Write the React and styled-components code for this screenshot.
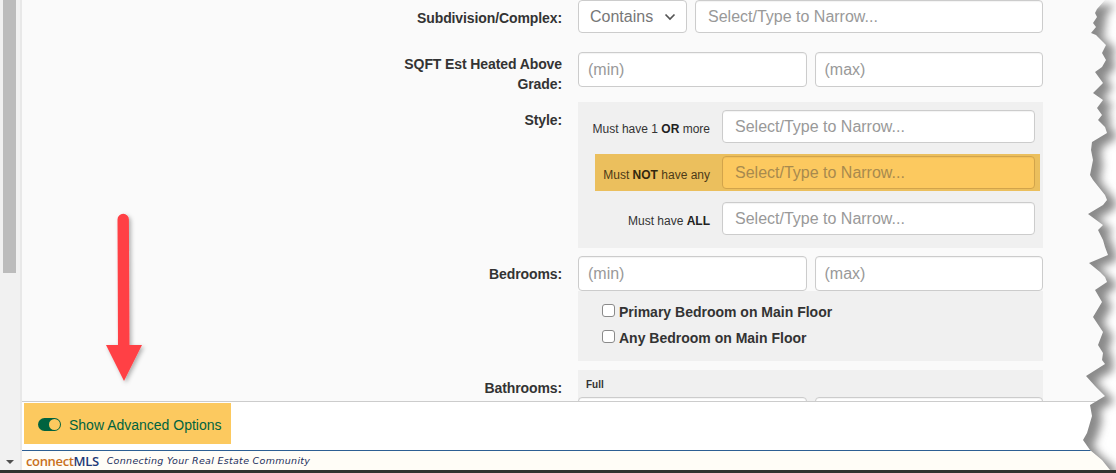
import React from 'react';
import styled, { createGlobalStyle } from 'styled-components';

const GlobalStyle = createGlobalStyle`
	html, body {
		margin: 0;
		padding: 0;
		background: #fff;
		overflow: hidden;
	}
	* {
		box-sizing: border-box;
	}
`;

const Page = styled.div`
	position: relative;
	width: 1116px;
	height: 473px;
	display: flex;
	flex-direction: column;
	overflow: hidden;
	font-family: 'Liberation Sans', Arial, sans-serif;
	color: #333;
`;

const Window = styled.div`
	flex: 1;
	min-height: 0;
	display: flex;
`;

const BottomStrip = styled.div`
	height: 3px;
	background: #33322f;
`;

const Scrollbar = styled.div`
	width: 20px;
	background: #f1f1f1;
	display: flex;
	flex-direction: column;
	justify-content: space-between;
	align-items: flex-start;
	padding: 0 0 6px 3px;
`;

const ScrollThumb = styled.div`
	width: 13px;
	height: 273px;
	background: #bcbcbc;
`;

const ScrollArrow = styled.div`
	width: 0;
	height: 0;
	margin-left: 3px;
	border-left: 4px solid transparent;
	border-right: 4px solid transparent;
	border-top: 4px solid #505050;
`;

const Main = styled.div`
	flex: 1;
	min-width: 0;
	display: flex;
	flex-direction: column;
	border-left: 2px solid #e8e8e8;
	background: #fff;
`;

const FormArea = styled.div`
	height: 401px;
	flex: none;
	overflow: hidden;
	background: #fafafa;
`;

const Form = styled.div`
	display: grid;
	grid-template-columns: 540px 465px;
	column-gap: 16px;
`;

const FieldLabel = styled.div`
	text-align: right;
	font-size: 14px;
	font-weight: bold;
	line-height: 20px;
	letter-spacing: -0.1px;
	padding-top: ${({ $top }) => $top}px;
	padding-left: 370px;
`;

const Field = styled.div`
	margin-bottom: ${({ $gap }) => $gap}px;
	min-width: 0;
`;

const InputRow = styled.div`
	display: flex;
	gap: 8px;
`;

const TextBox = styled.input`
	flex: 1;
	min-width: 0;
	width: 100%;
	height: ${({ $h }) => $h}px;
	padding: 0 8px 0 ${({ $pad }) => $pad}px;
	border: 1px solid ${({ $hot }) => ($hot ? '#d2a44b' : '#ccc')};
	border-radius: 4px;
	background: ${({ $hot }) => ($hot ? '#fcc95f' : '#fff')};
	box-shadow: inset 0 1px 1px rgba(0, 0, 0, 0.05);
	font-family: inherit;
	font-size: 16px;
	outline: none;

	&::placeholder {
		color: ${({ $hot }) => ($hot ? '#a88a4e' : '#999')};
		opacity: 1;
	}
`;

const SelectBox = styled.div`
	flex: none;
	width: 109px;
	height: 33px;
	display: flex;
	align-items: center;
	gap: 11px;
	padding-left: 11px;
	border: 1px solid #ccc;
	border-radius: 4px;
	background: #fff;
	color: #777;
	font-size: 16px;
`;

const Panel = styled.div`
	background: #f0f0f0;
	padding: ${({ $pad }) => $pad};
`;

const RuleRow = styled.div`
	display: grid;
	grid-template-columns: 115px 313px;
	column-gap: 12px;
	align-items: center;
	width: 445px;
	height: 37px;
	margin: 0 0 9px 17px;
	padding-right: 5px;
	background: ${({ $hot }) => ($hot ? '#ebbf5d' : 'transparent')};

	&:last-child {
		margin-bottom: 0;
	}
`;

const RuleLabel = styled.div`
	display: flex;
	justify-content: flex-end;
	font-size: 12px;
	line-height: 16px;
	padding-top: 5px;
	white-space: nowrap;
	color: ${({ $hot }) => ($hot ? '#4b3a17' : '#333')};

	b {
		color: ${({ $hot }) => ($hot ? '#33280f' : '#222')};
	}
`;

const CheckLine = styled.label`
	display: flex;
	align-items: center;
	gap: 4px;
	height: 26px;
	font-size: 14px;
	font-weight: bold;
`;

const CheckBox = styled.input`
	appearance: none;
	flex: none;
	width: 13px;
	height: 13px;
	margin: -4px 0 0;
	border: 1px solid #8a8a8a;
	border-radius: 3px;
	background: #fff;
`;

const TinyLabel = styled.div`
	font-size: 10px;
	font-weight: bold;
	line-height: 12px;
	margin: 0 0 6px 8px;
	color: #333;
`;

const AdvancedBar = styled.div`
	height: 49px;
	flex: none;
	border-top: 1px solid #ccc;
	padding: 1px 0 0 2px;
	background: #fff;
`;

const AdvancedButton = styled.div`
	width: 207px;
	height: 41px;
	display: flex;
	align-items: center;
	gap: 8px;
	padding: 2px 0 0 14px;
	background: #fcc95f;
	color: #00633f;
	font-size: 14px;
`;

const Switch = styled.div`
	width: 23px;
	height: 13px;
	display: flex;
	align-items: center;
	justify-content: flex-end;
	padding-right: 1px;
	border-radius: 7px;
	background: #00633f;
`;

const SwitchKnob = styled.div`
	width: 11px;
	height: 11px;
	border-radius: 50%;
	background: #fcc95f;
`;

const Footer = styled.div`
	flex: 1;
	display: flex;
	align-items: center;
	gap: 8px;
	padding-left: 4px;
	border-top: 1px solid #2d5f93;
	background: #fffdf7;
`;

const Brand = styled.div`
	font-family: 'Open Sans', 'Noto Sans', sans-serif;
	font-size: 13px;
	font-weight: 600;
	letter-spacing: -0.35px;
	color: #c8701c;

	span {
		color: #1f3a78;
	}
`;

const Tagline = styled.div`
	font-family: 'DejaVu Sans', Verdana, sans-serif;
	font-size: 9.5px;
	font-style: italic;
	letter-spacing: 0.3px;
	color: #1c2f5c;
`;

const ArrowArt = styled.svg`
	position: absolute;
	left: 96px;
	top: 205px;
`;

const TornEdge = styled.svg`
	position: absolute;
	right: 0;
	top: 0;
`;

const EDGE = [
	[1105, 0], [1097, 9], [1095, 13], [1097, 17], [1093, 23], [1096, 27], [1091, 33], [1096, 35],
	[1103, 42], [1106, 45], [1102, 53], [1106, 60], [1102, 67], [1095, 72], [1103, 83], [1093, 93],
	[1103, 100], [1097, 108], [1102, 115], [1098, 120], [1105, 127], [1107, 133], [1092, 142], [1091, 150],
	[1093, 160], [1090, 175], [1093, 180], [1105, 195], [1107, 200], [1103, 205], [1088, 214], [1103, 225],
	[1098, 230], [1103, 240], [1105, 247], [1108, 255], [1089, 263], [1100, 272], [1105, 277], [1107, 282],
	[1095, 290], [1102, 302], [1093, 317], [1103, 332], [1098, 345], [1103, 353], [1102, 360], [1105, 364],
	[1086, 376], [1095, 386], [1105, 396], [1090, 405], [1092, 416], [1087, 433], [1083, 440], [1090, 450],
	[1102, 460], [1110, 470],
];

const EDGE_LEFT = 1060;
const edgePoints = EDGE.map(([x, y]) => `${x - EDGE_LEFT},${y}`).join(' ');
const paperRight = `56,0 ${edgePoints} 56,470`;
const paperLeft = `0,0 ${edgePoints} 0,470`;

const Chevron = () => (
	<svg width="12" height="8" viewBox="0 0 12 8" fill="none">
		<path d="M1.5 1.5L6 6l4.5-4.5" stroke="#555" strokeWidth="1.7" />
	</svg>
);

const Rule = ({ hot, children }) => (
	<RuleRow $hot={hot}>
		<RuleLabel $hot={hot}>
			<span>{children}</span>
		</RuleLabel>
		<TextBox $h={33} $pad={12} $hot={hot} readOnly placeholder="Select/Type to Narrow..." />
	</RuleRow>
);

const MinMax = () => (
	<InputRow>
		<TextBox $h={35} $pad={9} readOnly placeholder="(min)" />
		<TextBox $h={35} $pad={9} readOnly placeholder="(max)" />
	</InputRow>
);

export default function App() {
	return (
		<Page>
			<GlobalStyle />
			<Window>
				<Scrollbar>
					<ScrollThumb />
					<ScrollArrow />
				</Scrollbar>
				<Main>
					<FormArea>
						<Form>
							<FieldLabel $top={8}>Subdivision/Complex:</FieldLabel>
							<Field $gap={19}>
								<InputRow>
									<SelectBox>
										Contains
										<Chevron />
									</SelectBox>
									<TextBox $h={33} $pad={12} readOnly placeholder="Select/Type to Narrow..." />
								</InputRow>
							</Field>

							<FieldLabel $top={2}>SQFT Est Heated Above Grade:</FieldLabel>
							<Field $gap={15}>
								<MinMax />
							</Field>

							<FieldLabel $top={8}>Style:</FieldLabel>
							<Field $gap={8}>
								<Panel $pad="6px 0 11px">
									<Rule>Must have 1 <b>OR</b> more</Rule>
									<Rule hot>Must <b>NOT</b> have any</Rule>
									<Rule>Must have <b>ALL</b></Rule>
								</Panel>
							</Field>

							<FieldLabel $top={8}>Bedrooms:</FieldLabel>
							<Field $gap={9}>
								<MinMax />
								<Panel $pad="8px 0 10px 24px">
									<CheckLine>
										<CheckBox type="checkbox" />
										Primary Bedroom on Main Floor
									</CheckLine>
									<CheckLine>
										<CheckBox type="checkbox" />
										Any Bedroom on Main Floor
									</CheckLine>
								</Panel>
							</Field>

							<FieldLabel $top={8}>Bathrooms:</FieldLabel>
							<Field $gap={0}>
								<Panel $pad="9px 0 0">
									<TinyLabel>Full</TinyLabel>
									<MinMax />
								</Panel>
							</Field>
						</Form>
					</FormArea>
					<AdvancedBar>
						<AdvancedButton>
							<Switch>
								<SwitchKnob />
							</Switch>
							Show Advanced Options
						</AdvancedButton>
					</AdvancedBar>
					<Footer>
						<Brand>connect<span>MLS</span></Brand>
						<Tagline>Connecting Your Real Estate Community</Tagline>
					</Footer>
				</Main>
			</Window>
			<BottomStrip />

			<ArrowArt width="60" height="190" viewBox="0 0 60 190">
				<defs>
					<filter id="arrowShadow" x="-30%" y="-10%" width="170%" height="120%">
						<feDropShadow dx="2" dy="2" stdDeviation="2" floodColor="#000" floodOpacity="0.3" />
					</filter>
				</defs>
				<g filter="url(#arrowShadow)" fill="#ff4044">
					<path d="M21.5 14.5a5.7 5.7 0 0 1 11.4 0L33.5 142h-11.5z" />
					<path d="M10 140h36L28 176z" />
				</g>
			</ArrowArt>

			<TornEdge width="56" height="470" viewBox="0 0 56 470">
				<defs>
					<clipPath id="beyondPaper">
						<polygon points={paperRight} />
					</clipPath>
					<filter id="tornBlur" x="-30%" y="-5%" width="160%" height="110%">
						<feGaussianBlur stdDeviation="4" />
					</filter>
				</defs>
				<polygon points={paperRight} fill="#fff" />
				<g clipPath="url(#beyondPaper)">
					<polygon points={paperLeft} fill="#8a8a8a" filter="url(#tornBlur)" transform="translate(10 5)" />
				</g>
			</TornEdge>
		</Page>
	);
}
